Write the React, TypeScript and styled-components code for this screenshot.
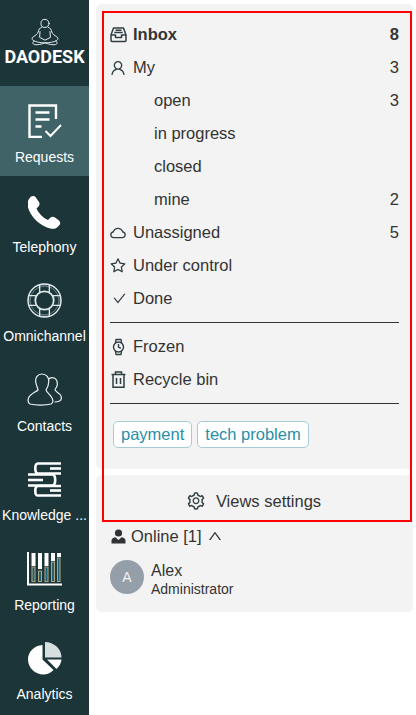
import React from 'react';
import styled, { createGlobalStyle } from 'styled-components';
import {
  AiOutlineCheck,
  AiOutlineCloud,
  AiOutlineSetting,
  AiOutlineStar,
  AiOutlineUp,
  AiOutlineUser,
} from 'react-icons/ai';

const GlobalStyle = createGlobalStyle`
  html, body {
    margin: 0;
    padding: 0;
    height: 100%;
    background: #fff;
    font-family: "Liberation Sans", Arial, sans-serif;
    overflow: hidden;
  }
`;

const Page = styled.div`
  display: flex;
  width: 416px;
  height: 715px;
`;

// left navigation
const Sidebar = styled.nav`
  width: 89px;
  height: 715px;
  flex: none;
  background: #1c3539;
  overflow: hidden;
`;

const Logo = styled.div`
  height: 86px;
  box-sizing: border-box;
  padding-top: 18px;
  display: flex;
  flex-direction: column;
  align-items: center;
  color: #fff;
`;

const LogoText = styled.div`
  font-family: Roboto, sans-serif;
  font-weight: 700;
  font-size: 18px;
  line-height: 18px;
  letter-spacing: 0;
  margin-top: 2px;
`;

const NavItem = styled.div<{ $active?: boolean }>`
  height: 89.5px;
  box-sizing: border-box;
  padding-top: 17px;
  display: flex;
  flex-direction: column;
  align-items: center;
  background: ${({ $active }) => ($active ? '#3f6367' : 'transparent')};
  color: #fff;
`;

const NavIconBox = styled.div`
  height: 36px;
  display: flex;
  align-items: center;
  justify-content: center;
`;

const NavLabel = styled.div`
  width: 89px;
  margin-top: 10px;
  font-size: 14px;
  line-height: 16px;
  text-align: center;
  white-space: nowrap;
`;

// right column
const Main = styled.main`
  position: relative;
  width: 317px;
  margin: 4px 0 0 7px;
  display: flex;
  flex-direction: column;
  gap: 6px;
  align-items: stretch;
`;

const Card = styled.section`
  background: #f3f3f3;
  border-radius: 5px;
`;

const ListCard = styled(Card)`
  height: 465px;
  box-sizing: border-box;
  padding: 14px 14px 0 7px;
`;

const Row = styled.div<{ $bold?: boolean; $sub?: boolean }>`
  height: 33px;
  display: flex;
  align-items: center;
  padding-left: ${({ $sub }) => ($sub ? '51px' : '7px')};
  color: #333;
  font-size: 16.5px;
  font-weight: ${({ $bold }) => ($bold ? 700 : 400)};
`;

const RowIcon = styled.span`
  width: 23px;
  height: 18px;
  flex: none;
  display: flex;
  align-items: center;
  color: #2f3e42;
  font-size: 18px;
  margin-left: -1px;
  margin-right: 1px;
`;

const DoneIcon = styled(AiOutlineCheck)`
  font-size: 15px;
  margin-left: 3px;
`;

const RowLabel = styled.span`
  flex: 1;
`;

const Divider = styled.div`
  height: 1px;
  margin: 7px 0 7px 7px;
  background: #333;
`;

const Tags = styled.div`
  display: flex;
  gap: 5px;
  margin: 17px 0 0 10px;
`;

const Tag = styled.span`
  height: 27px;
  box-sizing: border-box;
  padding: 0 7px;
  display: flex;
  align-items: center;
  background: #fff;
  border: 1px solid #a5cbd8;
  border-radius: 5px;
  color: #2a8fa8;
  font-size: 16.5px;
`;

const BottomCard = styled(Card)`
  height: 137px;
  box-sizing: border-box;
  padding-top: 15px;
`;

const SettingsRow = styled.div`
  height: 22px;
  display: flex;
  align-items: center;
  justify-content: center;
  gap: 10px;
  padding-right: 2px;
  color: #333;
  font-size: 16.5px;
  svg {
    font-size: 20px;
    color: #2f3e42;
  }
`;

const OnlineRow = styled.div`
  height: 22px;
  margin: 13px 0 0 15px;
  display: flex;
  align-items: center;
  gap: 5px;
  color: #333;
  font-size: 16.5px;
`;

const UserRow = styled.div`
  display: flex;
  align-items: flex-start;
  gap: 7px;
  margin: 13px 0 0 14px;
`;

const Avatar = styled.div`
  width: 34px;
  height: 34px;
  border-radius: 50%;
  background: #949fa9;
  color: #f3f3f3;
  display: flex;
  align-items: center;
  justify-content: center;
  font-size: 14px;
`;

const UserInfo = styled.div`
  padding-top: 2px;
`;

const UserName = styled.div`
  color: #333;
  font-size: 16px;
  line-height: 18px;
`;

const UserRole = styled.div`
  color: #333;
  font-size: 14px;
  line-height: 16px;
  margin-top: 1px;
`;

// red annotation frame lying over the panel
const Highlight = styled.div`
  position: absolute;
  left: 6px;
  top: 7px;
  width: 310px;
  height: 511px;
  box-sizing: border-box;
  border: 2px solid #fe0000;
  pointer-events: none;
`;

const LogoMark = () => (
  <svg width="40" height="28" viewBox="0 0 44 31" fill="none" stroke="#e8eeee" strokeWidth="1.1" strokeLinejoin="round" strokeLinecap="round">
    <circle cx="22" cy="6" r="4.5" />
    <path d="M18.5 10C16 11 15 13 14.5 15.5C13.5 18 11 19.5 9.5 20.5C7.5 21.5 7 23.5 9 25C12 26.5 17 27.5 22 27.5C27 27.5 32 26.5 35 25C37 23.5 36.5 21.5 34.5 20.5C33 19.5 30.5 18 29.5 15.5C29 13 28 11 25.5 10" />
    <path d="M16.5 15L16 21.5L22 24.5L28 21.5L27.5 15" />
    <path d="M10 25.5C8 26.5 8 29 10.5 29.5C14 30 18 29 22 27.5C26 29 30 30 33.5 29.5C36 29 36 26.5 34 25.5" />
  </svg>
);

const RequestsIcon = () => (
  <svg width="34" height="34" viewBox="0 0 34 34" fill="none" stroke="currentColor" strokeWidth="2.4">
    <path d="M28 15V1.5H1.5V33H14" />
    <path d="M7.5 8.5H21.5M7.5 15.5H21.5M7.5 22.5H13.5" />
    <path d="M17.5 27L22.5 32L33 21" strokeWidth="2" />
  </svg>
);

const PhoneIcon = () => (
  <svg width="34" height="36" viewBox="1 -2.5 34 36" fill="currentColor">
    <path d="M3.5 1.5C5 0 7.5 0 8.5 1.5L12 6.5C13 8 12.5 10 11.5 11L9.5 13C11 17 16 22.5 21 24.5L23 22.5C24.5 21 26.5 21 28 22L32 25C33.5 26.5 33.5 28.5 32.5 29.5L30 32C28 34 24 33.5 20 32C10 28 3.5 20 1 12C0 8 0.5 4.5 3.5 1.5Z" />
  </svg>
);

const LifebuoyIcon = () => (
  <svg width="35" height="35" viewBox="0 0 36 36" fill="none" stroke="#dfe8e8" strokeWidth="1.4">
    <circle cx="18" cy="18" r="17" />
    <circle cx="18" cy="18" r="9.5" strokeWidth="1.8" />
    <circle cx="18" cy="18" r="14.8" strokeWidth="0.7" stroke="#8aa3a6" />
    <path d="M13 1.5V9.5M23 1.5V9.5M13 34.5V26.5M23 34.5V26.5M1.5 13H9.5M1.5 23H9.5M34.5 13H26.5M34.5 23H26.5" />
    <path d="M13 1.8H23M13 34.2H23M1.8 13V23M34.2 13V23" strokeWidth="0.8" />
  </svg>
);

const ContactsIcon = () => (
  <svg width="36" height="33" viewBox="0 0 36 33" fill="none" stroke="#eef3f3" strokeWidth="1.2">
    <path d="M15 1C10.5 1 8.2 4.5 8.7 9C9.2 12.5 11 15 11 17C9 19 3 21 1.5 25C0.5 28.5 1 30 3 31C8 32.5 19 32.5 24 31C26 30 26.5 28 25 25C23.5 21.5 19.5 19.5 19 17C20.5 14.5 21.7 12.5 21.7 9C22.2 4.5 19.5 1 15 1Z" />
    <path d="M21.5 6.5C23 4 27.5 4 29.5 7C31 10 30 14 28 16.5C28 18.5 31.5 19.5 33.5 22C35 24.5 34.5 27 32.5 28C31 28.7 29.5 29 27.5 29" />
  </svg>
);

const KnowledgeIcon = () => (
  <svg width="34" height="35" viewBox="0 0 34 35" fill="none" stroke="currentColor" strokeWidth="2.6">
    <path d="M33 1.5H10C8 1.5 7.3 3 7.3 6.5C7.3 10 8 11.5 10 11.5H33" />
    <path d="M22 6.5H33" />
    <path d="M0 12.5H24C26 12.5 27.2 14.5 27.2 18C27.2 21.5 26 23.5 24 23.5H0" />
    <path d="M0 18H15" />
    <path d="M33 24H10C8 24 7.3 25.5 7.3 29C7.3 32.5 8 33.5 10 33.5H33" />
    <path d="M22 28.5H33" />
  </svg>
);

const ReportingIcon = () => (
  <svg width="35" height="34" viewBox="0 0 35 34" fill="none">
    <path d="M1 0V32.5H35" stroke="#fff" strokeWidth="2" />
    <path d="M6.5 1V14M13 1V17M19.5 1V14M26 1V9M32 1V5" stroke="#fff" strokeWidth="4" />
    <path d="M5 15H8V29.5H5V15ZM11.5 19H14.5V29.5H11.5V19ZM18 15H21V29.5H18V15ZM24.5 10H27.5V29.5H24.5V10ZM30.5 6H33V29.5H30.5V6Z" fill="#1c5f78" stroke="#a9a27c" strokeWidth="1.1" />
  </svg>
);

const AnalyticsIcon = () => (
  <svg width="34" height="33" viewBox="0 0 34 33" fill="currentColor">
    <path d="M14.5 3V17.5L25.5 28C22.5 31 19 32.5 15.5 32.5C7 32.5 0 25.8 0 17.5C0 9.5 6.5 3.5 14.5 3Z" />
    <path d="M17 0C26 0 33.5 7 33.5 15.5H17V0Z" fill="#d7dedf" />
    <path d="M19 17.5H33.5C33.2 21 31.5 24.3 28.5 27L19 17.5Z" />
  </svg>
);

const InboxIcon = () => (
  <svg width="17" height="17" viewBox="0 0 17 17" fill="none" stroke="currentColor" strokeWidth="1.5" strokeLinejoin="round" style={{ marginLeft: 1 }}>
    <path d="M1 9L3.5 2H13.5L16 9V14.5C16 15.2 15.5 15.5 15 15.5H2C1.5 15.5 1 15.2 1 14.5V9Z" />
    <path d="M1 9H5.5V11.5H11.5V9H16M4.3 6.5H12.7M5.5 4.2H11.5" />
  </svg>
);

const WatchIcon = () => (
  <svg width="17" height="18" viewBox="0 0 17 18" fill="none" stroke="currentColor" strokeWidth="1.4" strokeLinejoin="round" strokeLinecap="round" style={{ marginLeft: 1 }}>
    <circle cx="8.5" cy="9" r="5" />
    <path d="M8.5 6.5V9.2L10.3 10M5.5 4.5L6 1.5H11L11.5 4.5M5.5 13.5L6 16.5H11L11.5 13.5" />
  </svg>
);

const TrashIcon = () => (
  <svg width="17" height="18" viewBox="0 0 17 18" fill="none" stroke="currentColor" strokeWidth="1.5" style={{ marginLeft: 1 }}>
    <path d="M1.5 3.5H15.5M5.5 3.5V1H11.5V3.5M3 3.5V16.3H14V3.5M6.5 7V13M10.5 7V13" />
  </svg>
);

const PersonSolidIcon = () => (
  <svg width="15" height="15" viewBox="0 0 15 15" fill="#2f3336">
    <circle cx="7.5" cy="4" r="3.6" />
    <path d="M0.5 14.5V11.5C0.5 9.5 2.5 8.5 4.5 8.3L7.5 11L10.5 8.3C12.5 8.5 14.5 9.5 14.5 11.5V14.5H0.5Z" />
  </svg>
);

const navItems = [
  { label: 'Requests', icon: <RequestsIcon />, active: true },
  { label: 'Telephony', icon: <PhoneIcon /> },
  { label: 'Omnichannel', icon: <LifebuoyIcon /> },
  { label: 'Contacts', icon: <ContactsIcon /> },
  { label: 'Knowledge ...', icon: <KnowledgeIcon /> },
  { label: 'Reporting', icon: <ReportingIcon /> },
  { label: 'Analytics', icon: <AnalyticsIcon /> },
];

const App: React.FC = () => (
  <Page>
    <GlobalStyle />
    <Sidebar>
      <Logo>
        <LogoMark />
        <LogoText>DAODESK</LogoText>
      </Logo>
      {navItems.map((item) => (
        <NavItem key={item.label} $active={item.active}>
          <NavIconBox>{item.icon}</NavIconBox>
          <NavLabel>{item.label}</NavLabel>
        </NavItem>
      ))}
    </Sidebar>
    <Main>
      <ListCard>
        <Row $bold>
          <RowIcon><InboxIcon /></RowIcon>
          <RowLabel>Inbox</RowLabel>8
        </Row>
        <Row>
          <RowIcon><AiOutlineUser /></RowIcon>
          <RowLabel>My</RowLabel>3
        </Row>
        <Row $sub><RowLabel>open</RowLabel>3</Row>
        <Row $sub><RowLabel>in progress</RowLabel></Row>
        <Row $sub><RowLabel>closed</RowLabel></Row>
        <Row $sub><RowLabel>mine</RowLabel>2</Row>
        <Row>
          <RowIcon><AiOutlineCloud /></RowIcon>
          <RowLabel>Unassigned</RowLabel>5
        </Row>
        <Row>
          <RowIcon><AiOutlineStar /></RowIcon>
          <RowLabel>Under control</RowLabel>
        </Row>
        <Row>
          <RowIcon><DoneIcon /></RowIcon>
          <RowLabel>Done</RowLabel>
        </Row>
        <Divider />
        <Row>
          <RowIcon><WatchIcon /></RowIcon>
          <RowLabel>Frozen</RowLabel>
        </Row>
        <Row>
          <RowIcon><TrashIcon /></RowIcon>
          <RowLabel>Recycle bin</RowLabel>
        </Row>
        <Divider />
        <Tags>
          <Tag>payment</Tag>
          <Tag>tech problem</Tag>
        </Tags>
      </ListCard>
      <BottomCard>
        <SettingsRow>
          <AiOutlineSetting />
          Views settings
        </SettingsRow>
        <OnlineRow>
          <PersonSolidIcon />
          Online [1]
          <AiOutlineUp size={16} />
        </OnlineRow>
        <UserRow>
          <Avatar>A</Avatar>
          <UserInfo>
            <UserName>Alex</UserName>
            <UserRole>Administrator</UserRole>
          </UserInfo>
        </UserRow>
      </BottomCard>
      <Highlight />
    </Main>
  </Page>
);

export default App;
